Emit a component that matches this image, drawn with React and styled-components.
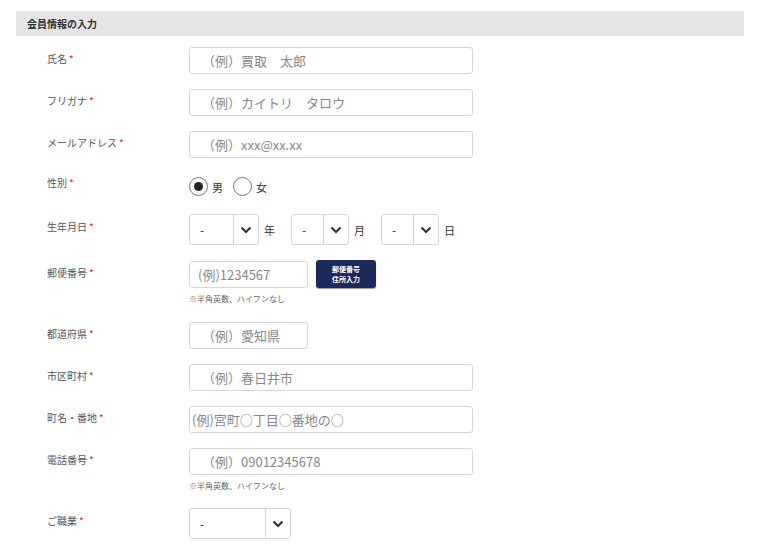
import React from "react";
import styled, { createGlobalStyle } from "styled-components";

const Global = createGlobalStyle`
  body { margin: 0; background: #fff; font-family: "Noto Sans CJK JP", "Noto Sans", sans-serif; }
  * { box-sizing: border-box; }
`;
const Wrap = styled.div`padding: 11px 33px 0 16px;`;
const Header = styled.div`
  height: 25px; background: #e5e5e5; display: flex; align-items: center;
  padding-left: 11px; font-size: 10px; font-weight: 700; color: #333;
`;
const Form = styled.div`padding-top: 11px; display: flex; flex-direction: column;`;
const Row = styled.div`display: flex; padding-left: 31px; margin-bottom: ${p => p.$mb}px;`;
const Label = styled.div`width: 142px; font-size: 10px; color: #555; padding-top: ${p => p.$pt || 6}px; line-height: 12px;`;
const Req = styled.span`color: #e02020; margin-left: 2px;`;
const Field = styled.div`display: flex; flex-direction: column;`;
const Input = styled.div`
  width: ${p => p.$w}px; height: 27px; border: 1px solid #d6d6d6; border-radius: 3px;
  display: flex; align-items: center; padding-left: ${p => p.$pl ?? 12}px;
  font-size: 13px; color: #888;
`;
const Note = styled.div`font-size: 8px; color: #666; margin-top: 5px;`;
const Inline = styled.div`display: flex; align-items: center;`;
const Radio = styled.span`
  width: 19px; height: 19px; border-radius: 50%; border: 1px solid #777;
  display: inline-flex; align-items: center; justify-content: center; margin-right: 4px;
  &::after { content: ""; width: 9px; height: 9px; border-radius: 50%; background: ${p => p.$on ? "#222" : "transparent"}; }
`;
const Opt = styled.span`font-size: 11px; color: #333; margin-right: ${p => p.$mr || 0}px;`;
const Select = styled.div`
  width: ${p => p.$w}px; height: 31px; border: 1px solid #d6d6d6; border-radius: 3px;
  display: flex; font-size: 12px; color: #333;
`;
const SelVal = styled.div`flex: 1; display: flex; align-items: center; padding-left: 10px;`;
const SelArrow = styled.div`width: 25px; border-left: 1px solid #d0d0d0; display: flex; align-items: center; justify-content: center;`;
const Unit = styled.span`font-size: 11px; color: #333; margin: 0 ${p => p.$mr}px 0 5px;`;
const Btn = styled.div`
  width: 60px; height: 28px; margin-left: 8px; margin-top: -1px; background: #1b2a5a; border-radius: 3px;
  color: #fff; font-size: 7px; font-weight: 700; line-height: 10px;
  display: flex; align-items: center; justify-content: center; text-align: center;
  box-shadow: 0 1px 1px rgba(0,0,0,.4);
`;

const Chevron = () => (
  <svg width="12" height="8" viewBox="0 0 12 8"><path d="M1.5 1.5 6 6l4.5-4.5" fill="none" stroke="#333" strokeWidth="2.2" /></svg>
);
const Sel = ({ w }) => (<Select $w={w}><SelVal>-</SelVal><SelArrow><Chevron /></SelArrow></Select>);
const L = ({ t, pt }) => (<Label $pt={pt}>{t}<Req>*</Req></Label>);

export default function App() {
  return (
    <Wrap>
      <Global />
      <Header>会員情報の入力</Header>
      <Form>
        <Row $mb={15}><L t="氏名" /><Input $w={284}>（例）買取　太郎</Input></Row>
        <Row $mb={15}><L t="フリガナ" /><Input $w={284}>（例）カイトリ　タロウ</Input></Row>
        <Row $mb={15}><L t="メールアドレス" /><Input $w={284}>（例）xxx@xx.xx</Input></Row>
        <Row $mb={14}><L t="性別" pt={4} /><Inline style={{ height: 27 }}><Radio $on /><Opt $mr={10}>男</Opt><Radio /><Opt>女</Opt></Inline></Row>
        <Row $mb={16}><L t="生年月日" pt={7} /><Inline><Sel w={70} /><Unit $mr={16}>年</Unit><Sel w={58} /><Unit $mr={16}>月</Unit><Sel w={58} /><Unit $mr={0}>日</Unit></Inline></Row>
        <Row $mb={18}><L t="郵便番号" /><Field><Inline><Input $w={119} $pl={8}>(例)1234567</Input><Btn>郵便番号<br />住所入力</Btn></Inline><Note>※半角英数、ハイフンなし</Note></Field></Row>
        <Row $mb={15}><L t="都道府県" /><Input $w={119}>（例）愛知県</Input></Row>
        <Row $mb={15}><L t="市区町村" /><Input $w={284}>（例）春日井市</Input></Row>
        <Row $mb={15}><L t="町名・番地" /><Input $w={284} $pl={2}>(例)宮町○丁目○番地の○</Input></Row>
        <Row $mb={17}><L t="電話番号" /><Field><Input $w={284}>（例）09012345678</Input><Note>※半角英数、ハイフンなし</Note></Field></Row>
        <Row $mb={10}><L t="ご職業" pt={7} /><Sel w={102} /></Row>
      </Form>
    </Wrap>
  );
}
